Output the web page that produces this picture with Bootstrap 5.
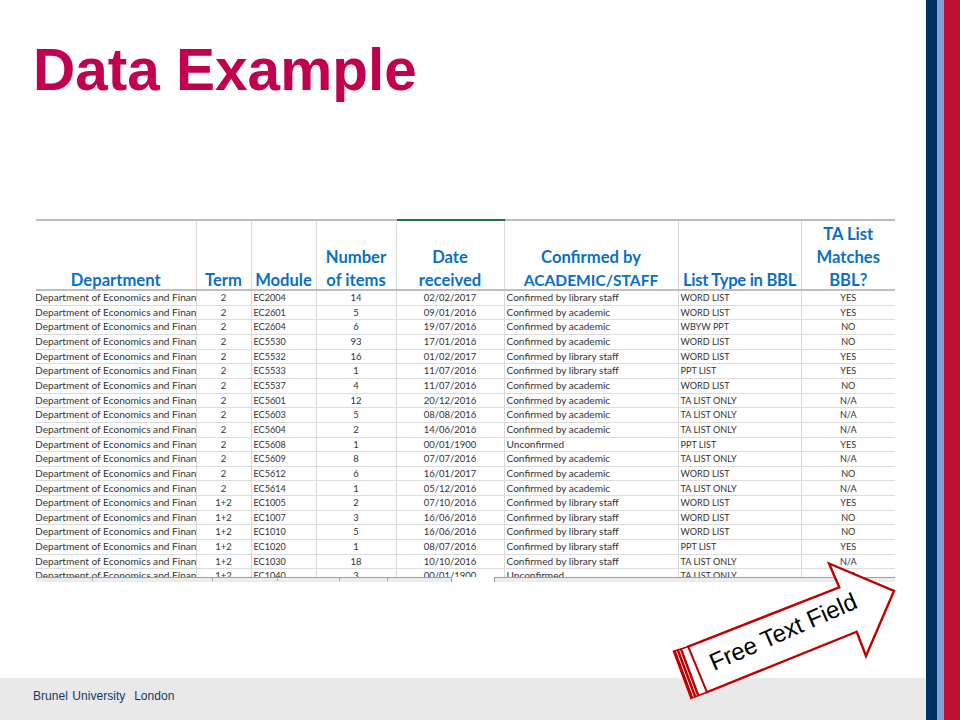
<!DOCTYPE html>
<html lang="en">
<head>
<meta charset="utf-8">
<title>Data Example</title>
<link href="https://cdn.jsdelivr.net/npm/bootstrap@5.3.0/dist/css/bootstrap.min.css" rel="stylesheet">
<style>
html,body{margin:0;padding:0;width:960px;height:720px;overflow:hidden;background:#fff}
.slide-wrap{width:960px;height:720px;position:relative}
.slide-main{width:926px}
.slide-title{font-family:"Liberation Sans",Arial,sans-serif;font-weight:700;font-size:58.5px;line-height:64px;color:#c20050;margin:38px 0 0 33px;height:181px}
.sheet-clip{margin-left:36px;width:859px;height:358px;overflow:hidden}
.sheet{table-layout:fixed;width:859px;border-collapse:collapse;font-family:Lato,"Liberation Sans",sans-serif;margin:0}
.sheet col:nth-child(1){width:160px}
.sheet col:nth-child(2){width:55px}
.sheet col:nth-child(3){width:65px}
.sheet col:nth-child(4){width:80px}
.sheet col:nth-child(5){width:108px}
.sheet col:nth-child(6){width:174px}
.sheet col:nth-child(7){width:123px}
.sheet col:nth-child(8){width:94px}
.sheet th,.sheet td{padding:0;overflow:hidden;white-space:nowrap;border:0;border-right:1px solid #d9d9d9}
.sheet th:last-child,.sheet td:last-child{border-right:0}
.sheet thead th{height:70px;vertical-align:bottom;font-size:16.6px;line-height:23px;font-weight:700;color:#0b70c2;white-space:nowrap;text-align:center;border-top:2px solid #bdbdbd;border-bottom:2px solid #bfbfbf}
.sheet thead th.date-col{border-top-color:#217346}
.hd-txt{margin-bottom:-3px}
.hd-caps{font-size:15.6px}
.hd-tight{letter-spacing:-.27px}
.sheet tbody td{height:14.67px;line-height:13.6px;font-size:9.1px;color:#333;border-bottom:1px solid #dcdcdc;vertical-align:middle}
.sheet td.cen{text-align:center}
.sheet td.lft{padding-left:2px}
.sheet td.wide{font-size:10.1px}
.sheet td.dep{font-size:10.15px;text-indent:-1px}
.sheet td.num{font-size:9.5px}
.scroll-strip{margin-left:36px;width:859px;height:5px}
.tab-strip{width:416px;background:#ececec;border-top:1px solid #9e9e9e;border-right:1px solid #9e9e9e}
.tab-cell{height:3px;border-right:1px solid #aaa}
.tab-a{width:57px}.tab-b{width:120px}.tab-c{width:65px}.tab-d{width:62px}.tab-e{width:48px}
.tab-gap{width:42px}
.bar-strip{background:#ececec;border-top:1px solid #9e9e9e;border-left:1px solid #9e9e9e}
.slide-foot{height:42px;background:#e9e9e9;color:#123a63;font-family:"Liberation Sans",Arial,sans-serif;font-size:12px;letter-spacing:.04px;padding-left:33px;padding-top:10px;line-height:16px;word-spacing:1px}
.stripe-navy{width:11px;background:#00305e}
.stripe-sky{width:7px;background:#82a3d8}
.stripe-red{width:16px;background:#bd1034}
.arrow-layer{position:absolute;left:0;top:0;width:960px;height:720px;pointer-events:none}
.arrow-text{font-family:"Liberation Sans",Arial,sans-serif;font-size:24px;fill:#000}
</style>
</head>
<body>
<div class="slide-wrap d-flex">
  <div class="slide-main d-flex flex-column">
    <h1 class="slide-title">Data Example</h1>
    <div class="sheet-clip">
      <table class="sheet">
        <colgroup><col><col><col><col><col><col><col><col></colgroup>
        <thead>
          <tr>
            <th><div class="hd-txt">Department</div></th><th><div class="hd-txt">Term</div></th><th><div class="hd-txt">Module</div></th><th><div class="hd-txt">Number<br>of items</div></th><th class="date-col"><div class="hd-txt">Date<br>received</div></th><th><div class="hd-txt">Confirmed by<br><span class="hd-caps">ACADEMIC/STAFF</span></div></th><th><div class="hd-txt hd-tight">List Type in BBL</div></th><th><div class="hd-txt">TA List<br>Matches<br>BBL?</div></th>
          </tr>
        </thead>
        <tbody>
          <tr><td class="dep">Department of Economics and Finance</td><td class="cen num">2</td><td class="lft">EC2004</td><td class="cen num">14</td><td class="cen num">02/02/2017</td><td class="lft wide">Confirmed by library staff</td><td class="lft">WORD LIST</td><td class="cen">YES</td></tr>
          <tr><td class="dep">Department of Economics and Finance</td><td class="cen num">2</td><td class="lft">EC2601</td><td class="cen num">5</td><td class="cen num">09/01/2016</td><td class="lft wide">Confirmed by academic</td><td class="lft">WORD LIST</td><td class="cen">YES</td></tr>
          <tr><td class="dep">Department of Economics and Finance</td><td class="cen num">2</td><td class="lft">EC2604</td><td class="cen num">6</td><td class="cen num">19/07/2016</td><td class="lft wide">Confirmed by academic</td><td class="lft">WBYW PPT</td><td class="cen">NO</td></tr>
          <tr><td class="dep">Department of Economics and Finance</td><td class="cen num">2</td><td class="lft">EC5530</td><td class="cen num">93</td><td class="cen num">17/01/2016</td><td class="lft wide">Confirmed by academic</td><td class="lft">WORD LIST</td><td class="cen">NO</td></tr>
          <tr><td class="dep">Department of Economics and Finance</td><td class="cen num">2</td><td class="lft">EC5532</td><td class="cen num">16</td><td class="cen num">01/02/2017</td><td class="lft wide">Confirmed by library staff</td><td class="lft">WORD LIST</td><td class="cen">YES</td></tr>
          <tr><td class="dep">Department of Economics and Finance</td><td class="cen num">2</td><td class="lft">EC5533</td><td class="cen num">1</td><td class="cen num">11/07/2016</td><td class="lft wide">Confirmed by library staff</td><td class="lft">PPT LIST</td><td class="cen">YES</td></tr>
          <tr><td class="dep">Department of Economics and Finance</td><td class="cen num">2</td><td class="lft">EC5537</td><td class="cen num">4</td><td class="cen num">11/07/2016</td><td class="lft wide">Confirmed by academic</td><td class="lft">WORD LIST</td><td class="cen">NO</td></tr>
          <tr><td class="dep">Department of Economics and Finance</td><td class="cen num">2</td><td class="lft">EC5601</td><td class="cen num">12</td><td class="cen num">20/12/2016</td><td class="lft wide">Confirmed by academic</td><td class="lft">TA LIST ONLY</td><td class="cen">N/A</td></tr>
          <tr><td class="dep">Department of Economics and Finance</td><td class="cen num">2</td><td class="lft">EC5603</td><td class="cen num">5</td><td class="cen num">08/08/2016</td><td class="lft wide">Confirmed by academic</td><td class="lft">TA LIST ONLY</td><td class="cen">N/A</td></tr>
          <tr><td class="dep">Department of Economics and Finance</td><td class="cen num">2</td><td class="lft">EC5604</td><td class="cen num">2</td><td class="cen num">14/06/2016</td><td class="lft wide">Confirmed by academic</td><td class="lft">TA LIST ONLY</td><td class="cen">N/A</td></tr>
          <tr><td class="dep">Department of Economics and Finance</td><td class="cen num">2</td><td class="lft">EC5608</td><td class="cen num">1</td><td class="cen num">00/01/1900</td><td class="lft wide">Unconfirmed</td><td class="lft">PPT LIST</td><td class="cen">YES</td></tr>
          <tr><td class="dep">Department of Economics and Finance</td><td class="cen num">2</td><td class="lft">EC5609</td><td class="cen num">8</td><td class="cen num">07/07/2016</td><td class="lft wide">Confirmed by academic</td><td class="lft">TA LIST ONLY</td><td class="cen">N/A</td></tr>
          <tr><td class="dep">Department of Economics and Finance</td><td class="cen num">2</td><td class="lft">EC5612</td><td class="cen num">6</td><td class="cen num">16/01/2017</td><td class="lft wide">Confirmed by academic</td><td class="lft">WORD LIST</td><td class="cen">NO</td></tr>
          <tr><td class="dep">Department of Economics and Finance</td><td class="cen num">2</td><td class="lft">EC5614</td><td class="cen num">1</td><td class="cen num">05/12/2016</td><td class="lft wide">Confirmed by academic</td><td class="lft">TA LIST ONLY</td><td class="cen">N/A</td></tr>
          <tr><td class="dep">Department of Economics and Finance</td><td class="cen num">1+2</td><td class="lft">EC1005</td><td class="cen num">2</td><td class="cen num">07/10/2016</td><td class="lft wide">Confirmed by library staff</td><td class="lft">WORD LIST</td><td class="cen">YES</td></tr>
          <tr><td class="dep">Department of Economics and Finance</td><td class="cen num">1+2</td><td class="lft">EC1007</td><td class="cen num">3</td><td class="cen num">16/06/2016</td><td class="lft wide">Confirmed by library staff</td><td class="lft">WORD LIST</td><td class="cen">NO</td></tr>
          <tr><td class="dep">Department of Economics and Finance</td><td class="cen num">1+2</td><td class="lft">EC1010</td><td class="cen num">5</td><td class="cen num">16/06/2016</td><td class="lft wide">Confirmed by library staff</td><td class="lft">WORD LIST</td><td class="cen">NO</td></tr>
          <tr><td class="dep">Department of Economics and Finance</td><td class="cen num">1+2</td><td class="lft">EC1020</td><td class="cen num">1</td><td class="cen num">08/07/2016</td><td class="lft wide">Confirmed by library staff</td><td class="lft">PPT LIST</td><td class="cen">YES</td></tr>
          <tr><td class="dep">Department of Economics and Finance</td><td class="cen num">1+2</td><td class="lft">EC1030</td><td class="cen num">18</td><td class="cen num">10/10/2016</td><td class="lft wide">Confirmed by library staff</td><td class="lft">TA LIST ONLY</td><td class="cen">N/A</td></tr>
          <tr><td class="dep">Department of Economics and Finance</td><td class="cen num">1+2</td><td class="lft">EC1040</td><td class="cen num">3</td><td class="cen num">00/01/1900</td><td class="lft wide">Unconfirmed</td><td class="lft">TA LIST ONLY</td><td class="cen">N/A</td></tr>
        </tbody>
      </table>
    </div>
    <div class="scroll-strip d-flex">
      <div class="tab-strip d-flex"><span class="tab-cell tab-a"></span><span class="tab-cell tab-b"></span><span class="tab-cell tab-c"></span><span class="tab-cell tab-d"></span><span class="tab-cell tab-e"></span></div>
      <div class="tab-gap"></div>
      <div class="bar-strip flex-grow-1"></div>
    </div>
    <div class="flex-grow-1"></div>
    <div class="slide-foot">Brunel University&nbsp; London</div>
  </div>
  <div class="stripe-navy"></div>
  <div class="stripe-sky"></div>
  <div class="stripe-red"></div>
  <svg class="arrow-layer" viewBox="0 0 960 720">
    <polygon points="829,563.5 894,591 866,656 856.7,631.7 706.7,692.3 688,646.7 839.3,587.3" fill="#fff" stroke="#c00000" stroke-width="2.4"/>
    <polygon points="673.5,651.2 688,646.7 706.7,692.3 691,698.5" fill="#fff" stroke="#c00000" stroke-width="1.6"/>
    <path d="M674.6 651 L692.1 698 M677.7 649.8 L695.2 696.8 M680.8 648.6 L698.3 695.6" stroke="#c00000" stroke-width="2.5" fill="none"/>
    <text class="arrow-text" transform="translate(714 671) rotate(-23.7)">Free Text Field</text>
  </svg>
</div>
<script src="https://cdn.jsdelivr.net/npm/bootstrap@5.3.0/dist/js/bootstrap.bundle.min.js"></script>
</body>
</html>
